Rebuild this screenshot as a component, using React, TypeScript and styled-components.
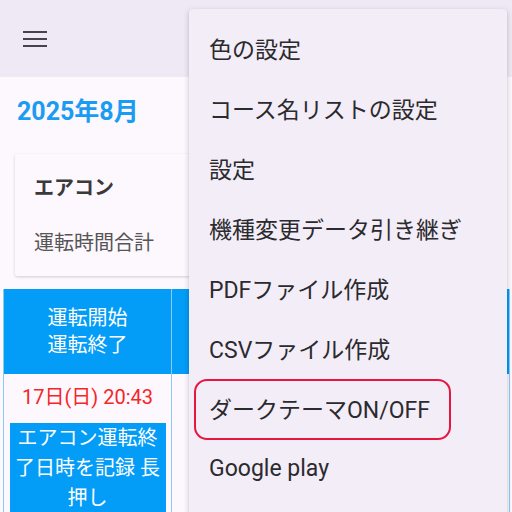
import React from "react";
import styled, { createGlobalStyle } from "styled-components";

const Global = createGlobalStyle`
  html, body { margin: 0; padding: 0; }
  body {
    width: 512px; height: 512px; overflow: hidden;
    background: #fdf7fe;
    font-family: Roboto, "Noto Sans CJK JP", sans-serif;
  }
`;

const Screen = styled.div`
  position: relative;
  width: 512px;
  height: 512px;
  overflow: hidden;
  background: #fdf7fe;
`;

const AppBar = styled.header`
  height: 77px;
  background: #efe9f5;
  display: flex;
  align-items: center;
  padding-left: 23px;
`;

const MenuButton = styled.div`
  width: 24px;
  height: 24px;
  display: flex;
  align-items: center;
  justify-content: center;
  color: #46434c;
`;

const Content = styled.main`
  display: flex;
  flex-direction: column;
`;

const MonthTitle = styled.h1`
  margin: 20px 0 0 17px;
  font-size: 25px;
  line-height: 30px;
  font-weight: 700;
  color: #1a9cf2;
`;

const Card = styled.section`
  margin: 27px 15px 0 15px;
  height: 122px;
  background: #fdf7fe;
  border-radius: 2px;
  box-shadow: 0 1px 3px rgba(0, 0, 0, 0.18);
  display: flex;
  flex-direction: column;
  padding: 21px 0 0 19px;
  box-sizing: border-box;
`;

const CardTitle = styled.div`
  font-size: 20px;
  font-weight: 700;
  color: #3a3a3a;
  line-height: 26px;
`;

const CardLabel = styled.div`
  margin-top: 29px;
  font-size: 20px;
  color: #555;
  line-height: 26px;
`;

const Table = styled.div`
  margin: 13px 0 0 3px;
  display: grid;
  grid-template-columns: 168px 338px;
  border-left: 1px solid #8cc9f5;
`;

const HeadCell = styled.div`
  background: #039cf7;
  height: 85px;
  border-right: 1px solid #8cc9f5;
  color: #fff;
  font-size: 20px;
  line-height: 27px;
  display: flex;
  flex-direction: column;
  align-items: center;
  justify-content: center;
`;

const BodyCell = styled.div`
  border-right: 1px solid #8cc9f5;
  display: flex;
  flex-direction: column;
  align-items: center;
  padding-top: 10px;
`;

const TimeText = styled.div`
  color: #f52626;
  font-size: 20px;
  line-height: 26px;
`;

const RecordButton = styled.div`
  margin-top: 13px;
  width: 156px;
  background: #039cf7;
  color: #fff;
  font-size: 20px;
  line-height: 30px;
  text-align: center;
  padding: 0 4px;
  box-sizing: border-box;
`;

const Menu = styled.nav`
  position: absolute;
  left: 189px;
  top: 9px;
  width: 318px;
  height: 520px;
  background: #f3edf7;
  border-radius: 4px;
  box-shadow: 0 2px 6px rgba(0, 0, 0, 0.18), 0 1px 2px rgba(0, 0, 0, 0.1);
  display: flex;
  flex-direction: column;
  padding-top: 9px;
  box-sizing: border-box;
`;

const MenuItem = styled.div<{ $highlight?: boolean }>`
  height: 60px;
  display: flex;
  align-items: center;
  padding-left: 20px;
  font-size: 23px;
  color: #2b2a2e;
  position: relative;
  ${(p) =>
    p.$highlight &&
    `
    &::after {
      content: "";
      position: absolute;
      left: 5px;
      top: 1px;
      width: 257px;
      height: 61px;
      border: 2px solid #e8163f;
      border-radius: 13px;
      box-sizing: border-box;
    }
  `}
`;

const items = [
  "色の設定",
  "コース名リストの設定",
  "設定",
  "機種変更データ引き継ぎ",
  "PDFファイル作成",
  "CSVファイル作成",
  "ダークテーマON/OFF",
  "Google play",
];

export default function App() {
  return (
    <Screen>
      <Global />
      <AppBar>
        <MenuButton>
          <svg width="24" height="24" viewBox="0 0 24 24">
            <path d="M0 5h24M0 12h24M0 19h24" stroke="currentColor" strokeWidth="2.2" fill="none" />
          </svg>
        </MenuButton>
      </AppBar>
      <Content>
        <MonthTitle>2025年8月</MonthTitle>
        <Card>
          <CardTitle>エアコン</CardTitle>
          <CardLabel>運転時間合計</CardLabel>
        </Card>
        <Table>
          <HeadCell>
            <span>運転開始</span>
            <span>運転終了</span>
          </HeadCell>
          <HeadCell />
          <BodyCell>
            <TimeText>17日(日) 20:43</TimeText>
            <RecordButton>エアコン運転終了日時を記録 長押し</RecordButton>
          </BodyCell>
          <BodyCell />
        </Table>
      </Content>
      <Menu>
        {items.map((t) => (
          <MenuItem key={t} $highlight={t === "ダークテーマON/OFF"}>
            {t}
          </MenuItem>
        ))}
      </Menu>
    </Screen>
  );
}
